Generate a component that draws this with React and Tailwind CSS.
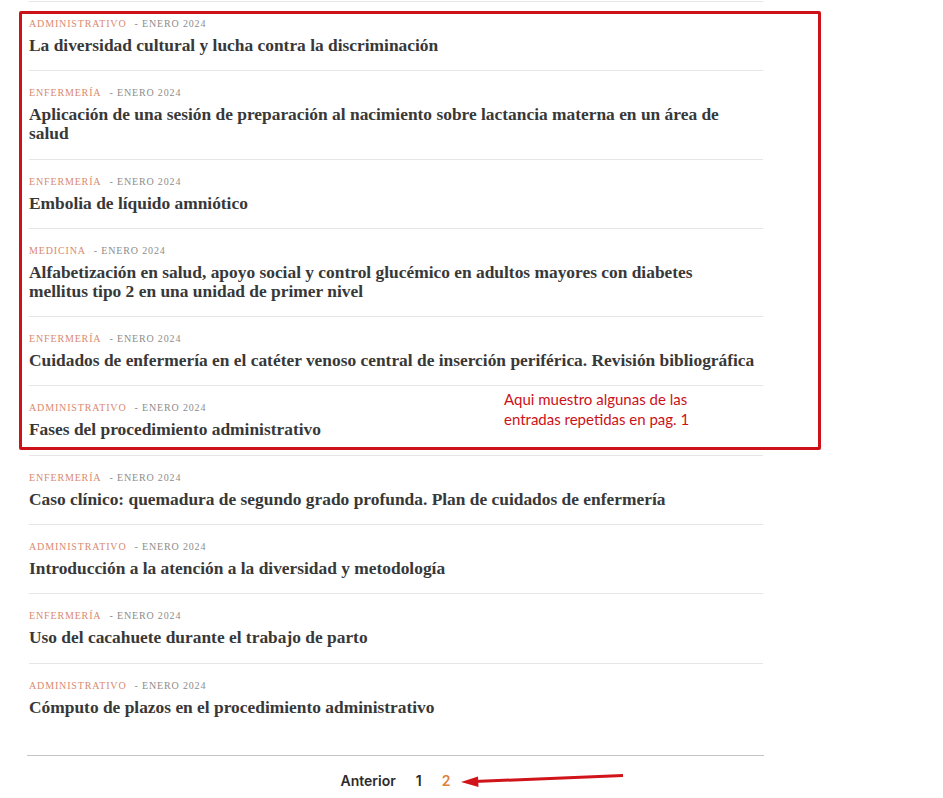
import React from "react";

const items = [
  ["ADMINISTRATIVO", "La diversidad cultural y lucha contra la discriminación"],
  ["ENFERMERÍA", "Aplicación de una sesión de preparación al nacimiento sobre lactancia materna en un área de salud"],
  ["ENFERMERÍA", "Embolia de líquido amniótico"],
  ["MEDICINA", "Alfabetización en salud, apoyo social y control glucémico en adultos mayores con diabetes mellitus tipo 2 en una unidad de primer nivel"],
  ["ENFERMERÍA", "Cuidados de enfermería en el catéter venoso central de inserción periférica. Revisión bibliográfica"],
  ["ADMINISTRATIVO", "Fases del procedimiento administrativo"],
  ["ENFERMERÍA", "Caso clínico: quemadura de segundo grado profunda. Plan de cuidados de enfermería"],
  ["ADMINISTRATIVO", "Introducción a la atención a la diversidad y metodología"],
  ["ENFERMERÍA", "Uso del cacahuete durante el trabajo de parto"],
  ["ADMINISTRATIVO", "Cómputo de plazos en el procedimiento administrativo"],
];

export default function App() {
  return (
    <div className="relative w-[943px] min-h-[798px] bg-white overflow-hidden">
      <div className="ml-[29px] w-[734px] mt-px">
        {items.map(([cat, title], i) => (
          <div key={i} className="border-t border-[#e6e6e6] pt-[14px] pb-[15.3px]">
            <div className="h-[16px] leading-[16px] text-[10px] tracking-[0.85px] font-['Liberation_Serif',serif]">
              <span className="text-[#d98a6f]">{cat}</span>
              <span className="text-[#8c8c8c] ml-[8px]">- ENERO 2024</span>
            </div>
            <div className="mt-[4px] w-[726px] text-[17.4px] leading-[19px] font-bold text-[#383838] font-['Liberation_Serif',serif]">
              {title}
            </div>
          </div>
        ))}
      </div>

      <div className="ml-[27px] w-[737px] mt-[23px] border-t border-[#c4c4c4] pt-[17px] flex justify-center gap-[20px] text-[14px] leading-[16px] font-semibold font-['Inter',sans-serif]">
        <span className="text-[#2b2b2b]">Anterior</span>
        <span className="text-[#2b2b2b]">1</span>
        <span className="text-[#e0803e]">2</span>
      </div>

      {/* annotation overlay */}
      <div className="absolute left-[19px] top-[11px] w-[802px] h-[439px] border-[3px] border-[#cc1218] rounded-[2px] pointer-events-none" />
      <div className="absolute left-[504px] top-[389px] text-[15px] leading-[20px] text-[#cc1218] font-['Lato',sans-serif]">
        Aqui muestro algunas de las
        <br />
        entradas repetidas en pag. 1
      </div>
      <svg className="absolute left-0 top-0" width="943" height="798" viewBox="0 0 943 798">
        <line x1="623" y1="775.5" x2="474" y2="781.5" stroke="#d0141a" strokeWidth="3" />
        <polygon points="461,782 478,776.5 478.5,787" fill="#d0141a" />
      </svg>
    </div>
  );
}
